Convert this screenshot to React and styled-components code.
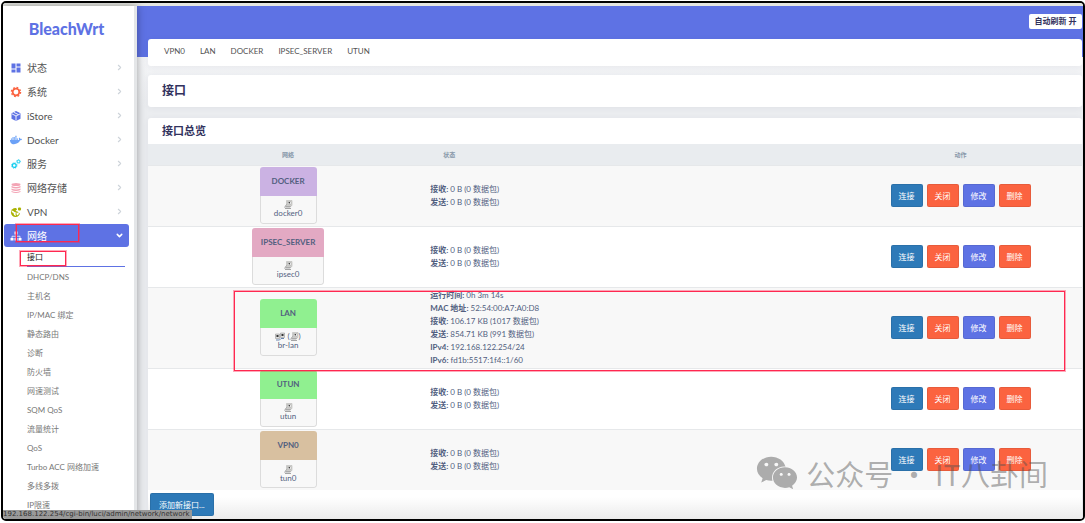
import React from 'react'
import styled, { createGlobalStyle } from 'styled-components'
import { MdDashboard } from 'react-icons/md'
import { FaDocker, FaWeixin } from 'react-icons/fa'
import { FiChevronRight, FiChevronDown } from 'react-icons/fi'

const GlobalStyle = createGlobalStyle`
    * {
        box-sizing: border-box;
    }
    body {
        margin: 0;
        background: #fff;
        font-family: Lato, "Noto Sans CJK SC", sans-serif;
        font-size: 9px;
        color: #525f7f;
    }
    button {
        font-family: inherit;
        cursor: pointer;
    }
    a {
        color: inherit;
        text-decoration: none;
    }
    ul {
        list-style: none;
        margin: 0;
        padding: 0;
    }
`

const Frame = styled.div`
    height: 100vh;
    padding: 1px 0 2px 1px;
`

const Window = styled.div`
    position: relative;
    height: 100%;
    display: flex;
    flex-direction: column;
    overflow: hidden;
    border: solid 2px #000;
    border-radius: 5px;
    background: #edeef1;
`

const Strip = styled.div`
    flex: none;
    height: 3px;
    background: #e4e5e1;
`

const Page = styled.div`
    flex: 1;
    min-height: 0;
    display: flex;
`

const Sidebar = styled.aside`
    flex: none;
    width: 134px;
    padding: 0 5px 0 1px;
    background: #fff;
    border-right: solid 3px #e4e6e8;
    box-shadow: 0 0 8px rgba(0, 0, 0, 0.35);
    z-index: 1;
`

const Logo = styled.a`
    display: block;
    height: 50px;
    line-height: 46px;
    text-align: center;
    font-size: 16px;
    font-weight: 900;
    color: #5e72e4;
`

const MenuItem = styled.a`
    position: relative;
    display: flex;
    align-items: center;
    height: 23px;
    margin-bottom: 1px;
    padding: 0 5px 0 6px;
    border-radius: 3px;
    font-size: 10px;
    color: ${props => props.$active ? '#fff' : '#525252'};
    background: ${props => props.$active ? '#5e72e4' : 'transparent'};

    svg:first-child {
        margin-right: 5px;
        color: ${props => props.$color};
    }
    svg:last-of-type {
        margin-left: auto;
        color: ${props => props.$active ? '#fff' : '#ced4da'};
    }
`

const SubItem = styled.a`
    position: relative;
    display: block;
    height: 19px;
    line-height: 19px;
    margin: 0 4px 0 23px;
    font-size: 8px;
    color: #777;
    ${props => props.$active && `
        margin-bottom: 1px;
        color: #222;
        border-bottom: solid 1px #5e72e4;
    `}
`

const Mark = styled.span`
    position: absolute;
    border: solid 1px #ff2850;
    outline: solid 1px rgba(255, 40, 80, 0.4);
    pointer-events: none;
`

const MenuMark = styled(Mark)`
    left: 12px;
    top: 0;
    width: 63px;
    height: 18px;
`

const SubMark = styled(Mark)`
    left: -7px;
    top: 3px;
    width: 46px;
    height: 15px;
`

const RowMark = styled(Mark)`
    left: 86px;
    right: 17px;
    top: 3px;
    bottom: -3px;
    z-index: 1;
`

const Main = styled.main`
    flex: 1;
    min-width: 0;
    padding: 0 1px 0 11px;
    background: linear-gradient(#5e72e4 51px, #f4f5f7 51px, #ebedf0 100px);
`

const TopBar = styled.header`
    display: flex;
    justify-content: flex-end;
    padding: 8px 0 10px;
`

const Refresh = styled.button`
    width: 53px;
    height: 15px;
    padding: 0;
    border: none;
    border-radius: 2px;
    background: #fff;
    color: #32325d;
    font-size: 8px;
    line-height: 15px;
    font-weight: bold;
`

const Card = styled.section`
    border-radius: 3px;
    background: #fff;
    box-shadow: 0 1px 6px rgba(50, 50, 93, 0.06);
`

const Tabs = styled(Card)`
    display: flex;
    gap: 15px;
    height: 27px;
    padding: 0 16px;
    font-size: 8px;
    line-height: 25px;
    color: #525252;
`

const Title = styled(Card)`
    margin: 9px 0 11px;
    padding: 0 14px;
`

const H2 = styled.h2`
    margin: 0;
    font-size: 12px;
    line-height: 32px;
    color: #32325d;
`

const Overview = styled(Card)`
    background: linear-gradient(#fff calc(100% - 22px), #ebebeb);
`

const H3 = styled.h3`
    margin: 0;
    padding: 0 14px;
    font-size: 11px;
    line-height: 26px;
    color: #32325d;
`

const Table = styled.table`
    width: 100%;
    table-layout: fixed;
    border-collapse: collapse;
`

const Th = styled.th`
    width: ${props => props.$width};
    height: 21px;
    padding: 0 0 0 ${props => props.$indent || 0}px;
    text-align: ${props => props.$indent ? 'left' : 'center'};
    font-size: 6px;
    background: #e9ecef;
    color: #8898aa;
`

const Tr = styled.tr`
    position: relative;
    height: 61px;
    border-top: solid 1px #e6e8ea;
    background: #fff;
    &:nth-child(odd) {
        background: #f8f8f8;
    }
`

const Td = styled.td`
    padding: 1px 2px;
    text-align: ${props => props.$center ? 'center' : 'left'};
    font-size: 8px;
    line-height: 13px;
`

const Zone = styled.div`
    display: inline-block;
    vertical-align: middle;
    min-width: 57px;
    overflow: hidden;
    border-radius: 3px;
    background: #f8f8f8;
`

const ZoneHead = styled.div`
    height: 29px;
    padding: 0 9px;
    line-height: 28px;
    font-weight: bold;
    background: ${props => props.$bg};
`

const ZoneBody = styled.div`
    height: 28px;
    padding-top: 4px;
    line-height: 9px;
    border: solid 1px #dcdcdc;
    border-top: none;
    border-radius: 0 0 3px 3px;
    svg {
        display: inline-block;
        vertical-align: middle;
    }
`

const Actions = styled.div`
    display: flex;
    justify-content: center;
    gap: 4px;
`

const Button = styled.button`
    width: 32px;
    height: 23px;
    padding: 0;
    border: solid 1px rgba(0, 0, 0, 0.08);
    border-radius: 2px;
    background: ${props => props.$bg};
    color: #fff;
    font-size: 8px;
`

const AddButton = styled(Button)`
    width: auto;
    padding: 0 8px;
    margin: 3px 2px;
`

const StatusUrl = styled.div`
    position: absolute;
    left: 0;
    bottom: 0;
    z-index: 2;
    height: 9px;
    padding-right: 3px;
    line-height: 9px;
    font-family: "DejaVu Sans", sans-serif;
    font-size: 7px;
    background: #999;
    color: #333;
`

const Watermark = styled.div`
    position: absolute;
    right: 35px;
    bottom: 24px;
    z-index: 2;
    display: flex;
    align-items: center;
    gap: 8px;
    font-size: 29px;
    line-height: 44px;
    font-weight: 400;
    font-family: "Noto Sans CJK SC", sans-serif;
    color: rgba(80, 80, 80, 0.45);
    pointer-events: none;
`

function GearIcon() {
    return <svg width="12" height="12" viewBox="0 0 24 24" fill="none" stroke="currentColor">
        <circle cx="12" cy="12" r="6.6" strokeWidth="3.6"/>
        <circle cx="12" cy="12" r="9.2" strokeWidth="2.6" strokeDasharray="3.6 3.625"/>
    </svg>
}

function BoxIcon() {
    return <svg width="12" height="12" viewBox="0 0 24 24">
        <path d="M12 2l9 4.5v11L12 22l-9-4.500v-11z" fill="currentColor"/>
        <path d="M3.500 7.500L12 12l8.500-4.500M12 12v9.500M7.500 4.500l9 4.500" fill="none" stroke="#fff" strokeWidth="1.800"/>
    </svg>
}

function GearsIcon() {
    return <svg width="12" height="12" viewBox="-2 -1 24 22" fill="none" stroke="currentColor">
        <circle cx="6.5" cy="13" r="3.8" strokeWidth="2.6"/>
        <circle cx="6.5" cy="13" r="5.6" strokeWidth="1.6" strokeDasharray="2.2 2.2"/>
        <circle cx="15" cy="5" r="2.6" strokeWidth="2"/>
        <circle cx="15" cy="5" r="4" strokeWidth="1.4" strokeDasharray="1.57 1.57"/>
    </svg>
}

function StorageIcon() {
    return <svg width="12" height="12" viewBox="0 0 24 24" fill="currentColor">
        <ellipse cx="12" cy="5" rx="9" ry="3"/>
        <path d="M3 8q9 4 18 0v3q-9 4-18 0zM3 13q9 4 18 0v3q-9 4-18 0zM3 18q9 4 18 0v2q-9 4-18 0z"/>
    </svg>
}

function VpnIcon() {
    return <svg width="12" height="12" viewBox="0 0 24 24">
        <circle cx="11" cy="13" r="9" fill="currentColor"/>
        <path d="M5 9l4 3 3 1-1 3 1 4-4-2-1-4-4-2zM12 3l2 4-3 3 4 1 3 4 4-3V2z" fill="#fff"/>
        <rect x="16" y="3" width="6" height="6" rx="2" fill="currentColor"/>
        <path d="M13 13l5 1-2 5-3-2z" fill="#fff"/>
    </svg>
}

function LanIcon() {
    return <svg width="12" height="12" viewBox="0 0 24 24" fill="currentColor">
        <path d="M9 3h6v6H9zM1 16h6v5H1zM9 16h6v5H9zM17 16h6v5h-6z"/>
        <path d="M12 9v7M4 16v-3.500h16V16" fill="none" stroke="currentColor" strokeWidth="1.500"/>
    </svg>
}

function DeviceIcon() {
    return <svg width="9" height="9" viewBox="0 0 18 18">
        <path d="M5 1h11v10H5z" fill="#e2e2dc" stroke="#aaa"/>
        <path d="M7 3h7v6H7z" fill="#fff" stroke="#999"/>
        <path d="M9 4h3v3H9z" fill="#444"/>
        <path d="M4 12h11l-3 3H2z" fill="#aaa"/>
        <path d="M1 15l4-6M2 17h12" stroke="#888" strokeWidth="1.500" fill="none"/>
    </svg>
}

function BridgeIcon() {
    return <svg width="10" height="9" viewBox="0 0 20 18">
        <path d="M1 4h8v9H1zM11 2h8v9h-8z" fill="#ddd" stroke="#888"/>
        <path d="M3 6h4v4H3zM13 4h4v4h-4z" fill="#333"/>
        <path d="M2 16h7l3-3h6" stroke="#6a86b0" strokeWidth="2" fill="none"/>
    </svg>
}

const menu = [
    { name: '状态', Icon: MdDashboard, color: '#5e72e4' },
    { name: '系统', Icon: GearIcon, color: '#fb6340' },
    { name: 'iStore', Icon: BoxIcon, color: '#5e72e4' },
    { name: 'Docker', Icon: FaDocker, color: '#6ba1f7' },
    { name: '服务', Icon: GearsIcon, color: '#11cdef' },
    { name: '网络存储', Icon: StorageIcon, color: '#f3a4b5' },
    { name: 'VPN', Icon: VpnIcon, color: '#aab200' },
    { name: '网络', Icon: LanIcon, color: '#fff', active: true },
]

const subMenu = ['接口', 'DHCP/DNS', '主机名', 'IP/MAC 绑定', '静态路由', '诊断', '防火墙', '网速测试', 'SQM QoS', '流量统计', 'QoS', 'Turbo ACC 网络加速', '多线多拨', 'IP限速']

const idle = [['接收', '0 B (0 数据包)'], ['发送', '0 B (0 数据包)']]

const networks = [
    { name: 'DOCKER', device: 'docker0', bg: '#cbb2e3', stats: idle },
    { name: 'IPSEC_SERVER', device: 'ipsec0', bg: '#e3a9c3', stats: idle },
    {
        name: 'LAN', device: 'br-lan', bg: '#90f090', bridge: true, marked: true,
        stats: [
            ['运行时间', '0h 3m 14s'],
            ['MAC 地址', '52:54:00:A7:A0:D8'],
            ['接收', '106.17 KB (1017 数据包)'],
            ['发送', '854.71 KB (991 数据包)'],
            ['IPv4', '192.168.122.254/24'],
            ['IPv6', 'fd1b:5517:1f4::1/60'],
        ],
    },
    { name: 'UTUN', device: 'utun', bg: '#90f090', stats: idle },
    { name: 'VPN0', device: 'tun0', bg: '#d8c0a0', stats: idle },
]

const buttons = [['连接', '#2e7ab8'], ['关闭', '#fb6340'], ['修改', '#5e72e4'], ['删除', '#fb6340']]

function Menu() {
    return <nav>
        {
            menu.map(({ name, Icon, color, active }) => {
                return <MenuItem key = {name} href = "#" $color = {color} $active = {active}>
                    <Icon size = {12}/>
                    {name}
                    {active ? <FiChevronDown size = {9} strokeWidth = {4}/> : <FiChevronRight size = {9} strokeWidth = {3}/>}
                    {active && <MenuMark/>}
                </MenuItem>
            })
        }
        <ul>
            {
                subMenu.map((name, i) => <li key = {name}>
                    <SubItem href = "#" $active = {i === 0}>
                        {name}
                        {i === 0 && <SubMark/>}
                    </SubItem>
                </li>)
            }
        </ul>
    </nav>
}

function NetworkRow({ network }) {
    return <Tr>
        <Td $center>
            <Zone>
                <ZoneHead $bg = {network.bg}>{network.name}</ZoneHead>
                <ZoneBody>
                    {network.bridge ? <div><BridgeIcon/> (<DeviceIcon/>)</div> : <div><DeviceIcon/></div>}
                    <div>{network.device}</div>
                </ZoneBody>
            </Zone>
        </Td>
        <Td>
            {network.stats.map(([label, value]) => <div key = {label}><b>{label}:</b> {value}</div>)}
        </Td>
        <Td>
            <Actions>
                {buttons.map(([label, bg]) => <Button key = {label} $bg = {bg}>{label}</Button>)}
            </Actions>
            {network.marked && <RowMark/>}
        </Td>
    </Tr>
}

function App() {
    return (
        <Frame>
            <GlobalStyle/>
            <Window>
                <Strip/>
                <Page>
                    <Sidebar>
                        <Logo href = "#">BleachWrt</Logo>
                        <Menu/>
                    </Sidebar>
                    <Main>
                        <TopBar>
                            <Refresh>自动刷新 开</Refresh>
                        </TopBar>
                        <Tabs>
                            {['VPN0', 'LAN', 'DOCKER', 'IPSEC_SERVER', 'UTUN'].map(tab => <a key = {tab} href = "#">{tab}</a>)}
                        </Tabs>
                        <Title>
                            <H2>接口</H2>
                        </Title>
                        <Overview>
                            <H3>接口总览</H3>
                            <Table>
                                <thead>
                                    <tr>
                                        <Th $width = "30%">网络</Th>
                                        <Th $width = "44%" $indent = {15}>状态</Th>
                                        <Th $width = "26%">动作</Th>
                                    </tr>
                                </thead>
                                <tbody>
                                    {networks.map(network => <NetworkRow key = {network.name} network = {network}/>)}
                                </tbody>
                            </Table>
                            <AddButton $bg = "#2e7ab8">添加新接口...</AddButton>
                        </Overview>
                    </Main>
                </Page>
                <StatusUrl>192.168.122.254/cgi-bin/luci/admin/network/network</StatusUrl>
                <Watermark>
                    <FaWeixin size = {42}/>
                    公众号 · IT八卦间
                </Watermark>
            </Window>
        </Frame>
    )
}

export default App;
